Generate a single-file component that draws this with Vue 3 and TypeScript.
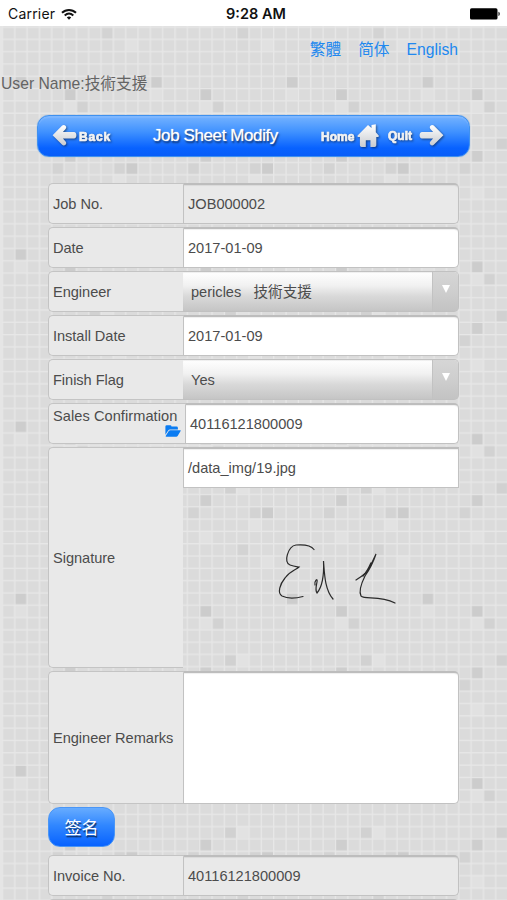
<script setup lang="ts">
interface Field {
  label: string
  value: string
  kind: 'text' | 'readonly' | 'select' | 'lookup' | 'signature' | 'area'
}

const fields: Field[] = [
  { label: 'Job No.', value: 'JOB000002', kind: 'readonly' },
  { label: 'Date', value: '2017-01-09', kind: 'text' },
  { label: 'Engineer', value: 'pericles\u00a0\u00a0 技術支援', kind: 'select' },
  { label: 'Install Date', value: '2017-01-09', kind: 'text' },
  { label: 'Finish Flag', value: 'Yes', kind: 'select' },
  { label: 'Sales Confirmation', value: '40116121800009', kind: 'lookup' },
  { label: 'Signature', value: '/data_img/19.jpg', kind: 'signature' },
  { label: 'Engineer Remarks', value: '', kind: 'area' },
]

const cell = { w: 135.67 / 11, h: 172.2 / 14 }
const columns = Array.from({ length: 11 }, (_, i) => i * cell.w)
const lines = Array.from({ length: 14 }, (_, i) => i * cell.h)

// column, row, shade of the accented tiles
const tiles: [number, number, string][] = [
  [1, 4, '#cdcdcd'], [5, 5, '#cccccc'], [5, 10, '#cecece'], [10, 11, '#cccccc'],
  [4, 11, '#d3d3d3'], [9, 11, '#d3d3d3'], [6, 6, '#d2d2d2'], [7, 9, '#d1d1d1'],
  [8, 0, '#d3d3d3'], [10, 1, '#e1e1e1'], [9, 12, '#e2e2e2'], [5, 13, '#e1e1e1'],
  [5, 6, '#e1e1e1'], [8, 9, '#e2e2e2'], [1, 5, '#e0e0e0'], [8, 1, '#d9d9d9'],
]
</script>

<template>
  <div class="screen">
    <svg class="backdrop" width="507" height="874">
      <defs>
        <pattern id="mosaic" x="1.7" y="0.4" width="135.67" height="172.2" patternUnits="userSpaceOnUse">
          <rect width="136" height="173" fill="#dbdbdb" />
          <rect v-for="(t, i) in tiles" :key="i" :x="t[0] * cell.w" :y="t[1] * cell.h" :width="cell.w" :height="cell.h" :fill="t[2]" />
          <rect v-for="x in columns" :key="'c' + x" :x="x" y="0" width="1.4" height="173" fill="#e7e7e7" />
          <rect v-for="y in lines" :key="'l' + y" x="0" :y="y" width="136" height="1.4" fill="#e7e7e7" />
        </pattern>
      </defs>
      <rect width="507" height="874" fill="url(#mosaic)" />
      <rect width="2" height="874" fill="#e5e5e5" />
    </svg>

    <header class="status">
      <span class="carrier">Carrier
        <svg width="16" height="13" viewBox="0 0 16 13" fill="none" stroke="#111" stroke-width="2">
          <path d="M1 4.8C5 .9 11 .9 15 4.8M3.7 7.5c2.6-2.4 6-2.4 8.6 0" />
          <path d="M5.8 9.4c1.4-1.1 3-1.1 4.4 0L8 11.8z" fill="#111" stroke="none" />
        </svg>
      </span>
      <span class="time">9:28 AM</span>
      <svg class="battery" width="31" height="12" viewBox="0 0 31 12">
        <rect x="0" y="0.3" width="27.5" height="11.2" rx="1.6" />
        <path d="M28.5 3.8c1.6.5 1.6 3.7 0 4.2z" />
      </svg>
    </header>

    <nav class="languages">
      <a>繁體</a><a>简体</a><a>English</a>
    </nav>
    <div class="user">User Name:技術支援</div>

    <section class="titlebar">
      <svg width="0" height="0" class="defs">
        <linearGradient id="silver" x1="0" y1="0" x2="0" y2="1">
          <stop offset="0" stop-color="#fff" /><stop offset="1" stop-color="#c8cbd0" />
        </linearGradient>
      </svg>
      <span class="action back">
        <svg width="25" height="25" viewBox="0 0 25 25">
          <path d="M.6 12.200 10.200 2.600c2.200-2 5.400 1 3.400 3.300L10.900 8.900H22q2.400.3 2.400 3.300T22 15.500H10.900l2.700 3c2 2.300-1.200 5.300-3.400 3.300z" />
        </svg>
        <span class="caption">Back</span>
      </span>
      <h1>Job Sheet Modify</h1>
      <span class="action home">
        <span class="caption">Home</span>
        <svg width="23" height="25" viewBox="0 0 23 25">
          <path d="M11 2 .6 12.600q-.4 1.400 1 1.400h1.300v8.300q0 1.700 1.700 1.700h4.200v-6.800h4.600V24h4.200q1.700 0 1.700-1.700V14h1.500q1.400 0 .9-1.400L18.800 9.300V1.200l-4.300.9v2.800z" />
        </svg>
      </span>
      <span class="action quit">
        <span class="caption">Quit</span>
        <svg width="25" height="25" viewBox="0 0 25 25">
          <path d="M24.400 12.200 14.800 2.600c-2.200-2-5.400 1-3.400 3.300l2.700 3H3Q.6 9.200.6 12.200T3 15.500h11.100l-2.700 3c-2 2.300 1.200 5.300 3.400 3.300z" />
        </svg>
      </span>
    </section>

    <main class="form">
      <div v-for="f in fields" :key="f.label" class="row" :class="f.kind">
        <label><span>{{ f.label }}</span>
          <svg v-if="f.kind === 'lookup'" class="folder" width="16" height="12" viewBox="0 0 16 12" fill="#0b7cf2">
            <path d="M.4 9.800V1.600Q.4.300 1.800.300h3.400q1.200 0 1.300 1.300h5.100q1.300 0 1.300 1.300v1.700H5q-1.200 0-2 1.100z" />
            <path d="M.7 11 3.800 6.100q.6-.9 1.600-.9h9.800q.9 0 .4.8l-2.800 4.800q-.6.900-1.600.900H1.200q-.8 0-.5-.700z" />
          </svg>
        </label>
        <div v-if="f.kind === 'signature'" class="signing">
          <div class="control">{{ f.value }}</div>
          <svg width="276" height="179" viewBox="0 0 276 179" fill="none" stroke="#2a2a2a" stroke-width="1.2" stroke-linecap="round">
            <path d="M131 61.500c-4-5.500-12-5-18-4.500-8 1-13 18-6 20 4 1.500 5.500 1.500 9 2-3 3-9 4-14 11-5 6-8 15-3 18 6 3 15 2 21 .5" />
            <path d="M132 97c-1-4 3-8 2-3-1 5-2 8 0 11 6-7 7-20 6.500-32 1 12 1 28 9.500 38" />
            <path d="M173 92q5-3 11-8 5-9 9-18-4 12-11 22-7 14-4 20c4 4 18-1 34 7" />
            <path d="M180 88q4-4 8-13" stroke-width="1.5" />
          </svg>
        </div>
        <div v-else class="control">
          <span>{{ f.value }}</span>
          <i v-if="f.kind === 'select'" class="drop"><b></b></i>
        </div>
      </div>
      <button class="sign">签名</button>
      <div class="row readonly">
        <label><span>Invoice No.</span></label>
        <div class="control">40116121800009</div>
      </div>
      <div class="row readonly">
        <label></label>
        <div class="control"></div>
      </div>
    </main>
  </div>
</template>

<style>
body {
  overflow: hidden;
}
</style>

<style scoped>
* {
  box-sizing: border-box;
}
.screen {
  position: relative;
  width: 507px;
  height: 900px;
  overflow: hidden;
  color: #4c4c4c;
  font: 14.600px/18px "Liberation Sans", "Noto Sans CJK TC", sans-serif;
}
.backdrop {
  position: absolute;
  top: 26px;
  left: 0;
  z-index: -1;
}
.status {
  display: grid;
  grid-template-columns: 1fr auto 1fr;
  align-items: center;
  height: 26px;
  padding: 2px 6px 0 8px;
  background: #fff;
  color: #111;
  font-family: Inter, "Liberation Sans", sans-serif;
  font-size: 14px;
}
.carrier {
  display: flex;
  align-items: center;
  gap: 6px;
  letter-spacing: .2px;
}
.time {
  font-weight: 600;
  font-size: 14.500px;
  padding-left: 3px;
}
.battery {
  justify-self: end;
}
.languages {
  display: flex;
  justify-content: flex-end;
  gap: 17px;
  padding: 15px 49px 0 0;
  height: 48px;
  color: #2188ef;
  font-size: 15.700px;
}
.user {
  height: 41px;
  padding-left: 1px;
  color: #646464;
  font-size: 15.700px;
  line-height: 20px;
}
.titlebar {
  display: flex;
  align-items: center;
  width: 433px;
  height: 42px;
  margin-left: 37px;
  padding: 0 25px 2px 14px;
  border-radius: 12px;
  border: 1px solid #3f91ef;
  background: linear-gradient(#75b3ff, #3f91ff 40%, #0862ff 80%, #075df8);
  box-shadow: inset 0 2px 1px #96c4ff55, 0 0 1px #599bea;
}
.defs {
  position: absolute;
}
.titlebar h1 {
  flex: none;
  margin: 0 41px 0 42px;
  padding-top: 2px;
  width: 127px;
  color: #fff;
  font-size: 17px;
  font-weight: 400;
  letter-spacing: -.4px;
  white-space: nowrap;
  text-shadow: 1px 2px 2px #0009, 0 0 1px #fff;
}
.action {
  display: flex;
  flex: none;
  align-items: center;
  gap: 2px;
  color: #f3f3f3;
  filter: drop-shadow(1px 1px 1px #0007);
}
.action svg {
  fill: url(#silver);
  flex: none;
}
.caption {
  padding-top: 3px;
  font: 900 12px/16px "Liberation Sans Narrow", "Liberation Sans", sans-serif;
  -webkit-text-stroke: .7px #f3f3f3;
}
.back .caption {
  width: 32px;
  letter-spacing: .8px;
}
.home .caption {
  width: 34px;
}
.quit {
  margin-left: 8px;
  gap: 4px;
}
.quit .caption {
  width: 27px;
  padding-top: 2px;
}
.form {
  display: flex;
  flex-direction: column;
  gap: 3px;
  width: 411px;
  margin: 26px 0 0 48px;
}
.row {
  display: grid;
  grid-template-columns: 135px 1fr;
  height: 41px;
  flex: none;
}
.row label {
  display: flex;
  align-items: center;
  padding-left: 4px;
  background: #e9e9e9;
  border: 1px solid #c4c4c4;
  border-right: 0;
  border-radius: 5px 0 0 5px;
  letter-spacing: -.04px;
}
.control {
  display: flex;
  align-items: center;
  justify-content: space-between;
  padding-left: 4px;
  background: #fff;
  border: 1px solid #c2c2c2;
  border-top: 2px solid #bdbdbd;
  border-radius: 0 5px 5px 0;
  box-shadow: inset 0 1px 1px #0001;
}
.readonly .control {
  background: #e9e9e9;
}
.select .control {
  padding-left: 8px;
  border-left: 0;
  border-top-width: 1px;
  border-color: #c1c1c1;
  background: linear-gradient(#fff, #f1f1f1 35%, #d9d9d9 62%, #c5c5c5);
}
.drop {
  display: flex;
  justify-content: center;
  align-self: stretch;
  width: 26px;
  padding-top: 13px;
  border-left: 1px solid #c2c2c2;
  border-radius: 0 4px 4px 0;
  background: linear-gradient(#d6d6d6, #cecece 50%, #c3c3c3);
}
.drop b {
  width: 0;
  height: 0;
  border: 4.500px solid transparent;
  border-top: 8px solid #fff;
  border-bottom: 0;
}
.lookup {
  grid-template-columns: 137px 1fr;
}
.lookup label {
  flex-direction: column;
  align-items: flex-start;
  justify-content: flex-start;
  padding-top: 3px;
  letter-spacing: .06px;
}
.folder {
  align-self: flex-end;
  margin: 0 4px 0 0;
}
.signature {
  height: 221px;
}
.signing .control {
  height: 41px;
  border-radius: 0;
}
.signing svg {
  display: block;
}
.area {
  height: 133px;
}
.sign {
  width: 67px;
  height: 40px;
  margin: 0 0 5px;
  padding: 0;
  border: 1px solid #4a96f6;
  border-radius: 12px;
  background: linear-gradient(#67acff, #3187ff 45%, #0762ff);
  color: #fff;
  font: 17px/20px "Noto Sans CJK SC", sans-serif;
  text-shadow: 1px 2px 1px #0009;
}
</style>
